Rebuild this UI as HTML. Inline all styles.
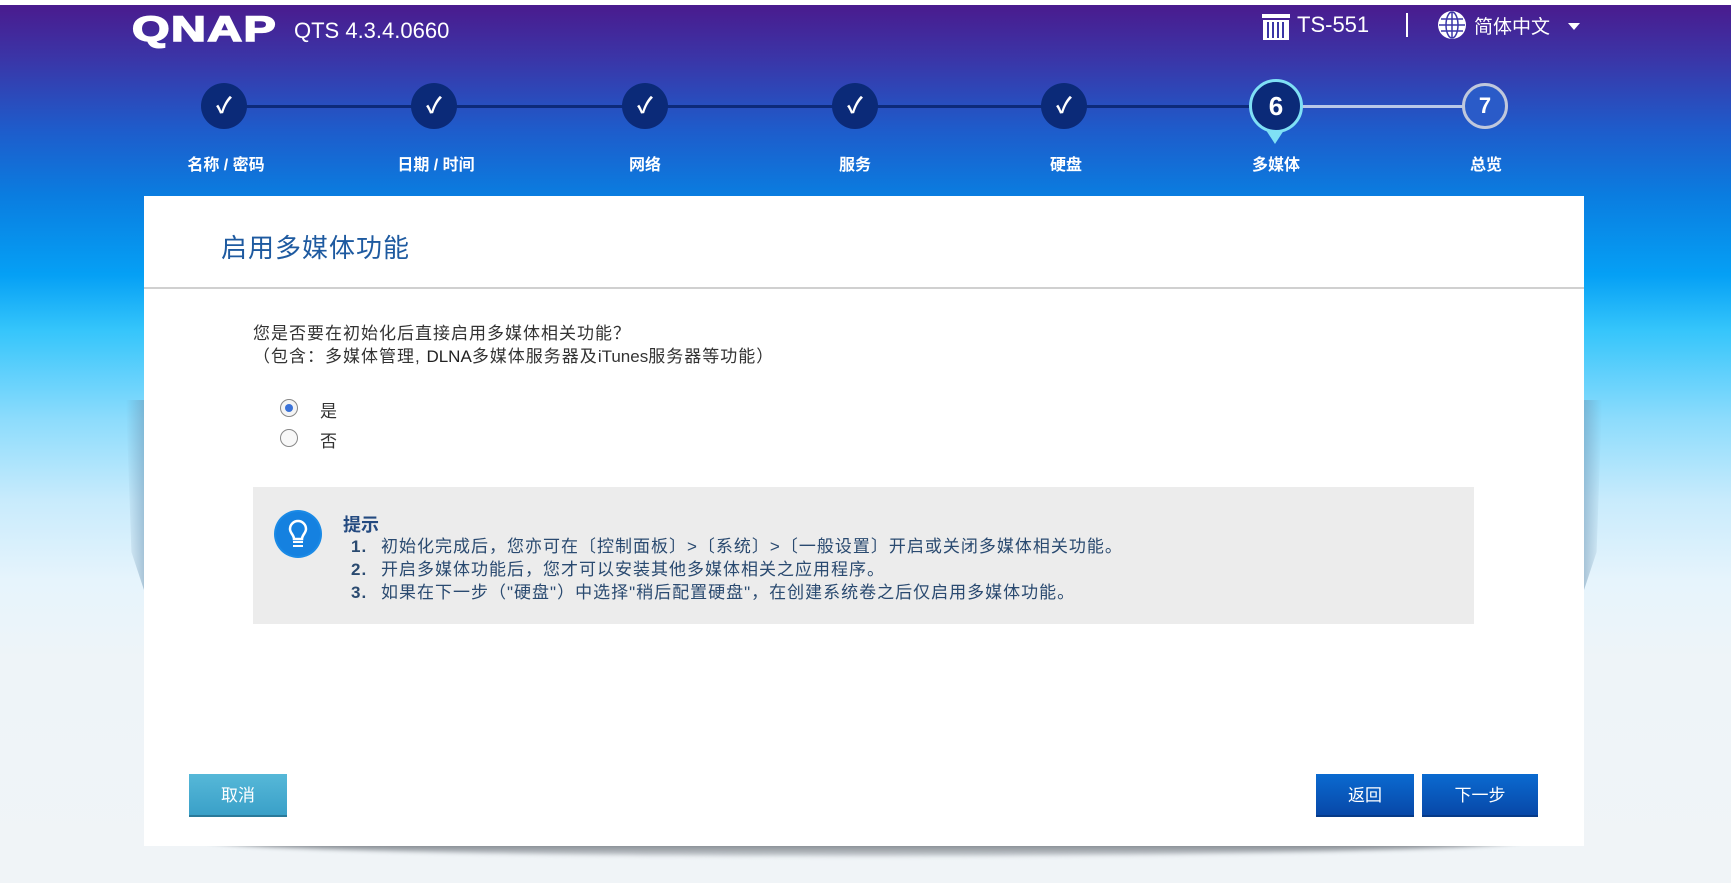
<!DOCTYPE html>
<html><head><meta charset="utf-8">
<style>
*{margin:0;padding:0;box-sizing:border-box}
body{width:1731px;height:883px;overflow:hidden;position:relative;font-family:"Liberation Sans","Noto Sans CJK SC",sans-serif;
background:linear-gradient(180deg,#fff 0,#fff 5px,#4a1b8e 5px,#3a36a8 60px,#1e5ccb 130px,#0a7de0 196px,#05a0f5 275px,#35c5fb 330px,#8ddcfc 420px,#c8ebfc 500px,#e6f4fc 580px,#eef4f8 660px,#f0f4f7 883px)}
.abs{position:absolute}
.logo{left:132px;top:10px;font:900 35px "Liberation Sans",sans-serif;color:#fff;letter-spacing:1px;transform:scaleX(1.38);transform-origin:left;-webkit-text-stroke:1.5px #fff}
.qts{left:294px;top:18px;font-size:22px;color:#fff}
.top{color:#fff;font-size:22px}
.line{top:105px;height:3px;background:#0d2a7a}
.circ{width:46px;height:46px;border-radius:50%;background:#0b2a78;color:#fff;text-align:center;line-height:46px;font-size:22px;font-weight:bold;top:83px}
.lbl{top:151px;color:#fff;font-size:16px;font-weight:bold;width:140px;text-align:center}
.card{left:144px;top:196px;width:1440px;height:650px;background:#fff}
.shadow{left:205px;top:840px;width:1318px;height:16px;background:linear-gradient(180deg,#6a7077,#c8cdd2);border-radius:0 0 50% 50%/0 0 100% 100%;filter:blur(2px)}
.txt{color:#333;font-size:17px;letter-spacing:1px}
.btn{color:#fff;font-size:17px;text-align:center;line-height:43px;height:43px}
</style></head><body>
<div class="abs" style="left:126px;top:400px;width:18px;height:190px;background:linear-gradient(90deg,rgba(120,160,190,0),rgba(110,150,180,.5));clip-path:polygon(0 0,100% 0,100% 100%,30% 80%)"></div>
<div class="abs" style="left:1584px;top:400px;width:18px;height:190px;background:linear-gradient(270deg,rgba(120,160,190,0),rgba(110,150,180,.5));clip-path:polygon(0 0,100% 0,70% 80%,0 100%)"></div>
<div class="abs logo">QNAP</div>
<div class="abs qts">QTS 4.3.4.0660</div>
<svg class="abs" style="left:1262px;top:14px" width="28" height="26"><rect x="0" y="0" width="28" height="4" fill="#fff"/><rect x="1" y="6" width="26" height="20" fill="#fff"/><g stroke="#3a35a5" stroke-width="2"><line x1="6" y1="8" x2="6" y2="24"/><line x1="11" y1="8" x2="11" y2="24"/><line x1="16" y1="8" x2="16" y2="24"/><line x1="21" y1="8" x2="21" y2="24"/></g></svg>
<div class="abs top" style="left:1297px;top:12px">TS-551</div>
<div class="abs" style="left:1406px;top:13px;width:2px;height:24px;background:#fff"></div>
<svg class="abs" style="left:1437px;top:10px" width="30" height="30"><circle cx="15" cy="15" r="14" fill="#fff"/><g stroke="#3a36a8" stroke-width="1.5" fill="none"><ellipse cx="15" cy="15" rx="6" ry="13"/><line x1="15" y1="2" x2="15" y2="28"/><line x1="2" y1="15" x2="28" y2="15"/><line x1="4" y1="9" x2="26" y2="9"/><line x1="4" y1="21" x2="26" y2="21"/></g></svg>
<div class="abs" style="left:1474px;top:12px;color:#fff;font-size:19px">简体中文</div>
<div class="abs" style="left:1568px;top:23px;border:6px solid transparent;border-top:7px solid #fff"></div>

<div class="abs line" style="left:224px;width:1051px"></div>
<div class="abs line" style="left:1275px;width:190px;background:#b8c8e8"></div>
<div class="abs circ" style="left:201px">✓</div>
<div class="abs circ" style="left:411px">✓</div>
<div class="abs circ" style="left:622px">✓</div>
<div class="abs circ" style="left:832px">✓</div>
<div class="abs circ" style="left:1041px">✓</div>
<div class="abs" style="left:1262px;top:124px;border:13px solid transparent;border-top:20px solid #7fe0f5"></div>
<div class="abs circ" style="left:1249px;top:79px;width:54px;height:54px;line-height:48px;border:3px solid #7fe0f5;font-size:26px">6</div>
<div class="abs circ" style="left:1462px;background:#2a5bc8;border:3px solid #c0c8dc;line-height:40px">7</div>
<div class="abs lbl" style="left:156px">名称 / 密码</div>
<div class="abs lbl" style="left:366px">日期 / 时间</div>
<div class="abs lbl" style="left:575px">网络</div>
<div class="abs lbl" style="left:785px">服务</div>
<div class="abs lbl" style="left:996px">硬盘</div>
<div class="abs lbl" style="left:1206px">多媒体</div>
<div class="abs lbl" style="left:1416px">总览</div>

<div class="abs shadow"></div>
<div class="abs card"></div>
<div class="abs" style="left:221px;top:228px;font-size:26px;color:#1e5aa0;letter-spacing:1px">启用多媒体功能</div>
<div class="abs" style="left:144px;top:287px;width:1440px;height:2px;background:#d0d0d0"></div>
<div class="abs txt" style="left:253px;top:319px">您是否要在初始化后直接启用多媒体相关功能？</div>
<div class="abs txt" style="left:253px;top:342px">（包含：多媒体管理, <span style="color:#222;letter-spacing:0">DLNA</span>多媒体服务器及<span style="letter-spacing:0">iTunes</span>服务器等功能）</div>
<div class="abs" style="left:280px;top:399px;width:18px;height:18px;border-radius:50%;border:1px solid #888;background:#f4f4f4"><div style="margin:4px;width:8px;height:8px;border-radius:50%;background:#3a72d8"></div></div>
<div class="abs" style="left:280px;top:429px;width:18px;height:18px;border-radius:50%;border:1px solid #888;background:#f8f8f8"></div>
<div class="abs txt" style="left:320px;top:397px">是</div>
<div class="abs txt" style="left:320px;top:427px">否</div>

<div class="abs" style="left:253px;top:487px;width:1221px;height:137px;background:#ececec"></div>
<svg class="abs" style="left:273px;top:509px" width="50" height="50"><circle cx="25" cy="25" r="24" fill="#1a8ae6"/><circle cx="25" cy="25" r="22" fill="#1581e0"/><path d="M17 20a8 8 0 1 1 16 0c0 4-4 6-4 10h-8c0-4-4-6-4-10z" fill="none" stroke="#fff" stroke-width="2.5"/><rect x="20" y="32" width="10" height="2" fill="#fff"/><rect x="20" y="36" width="10" height="2" fill="#fff"/></svg>
<div class="abs" style="left:343px;top:511px;font-size:18px;font-weight:bold;color:#244a80">提示</div>
<div class="abs" style="left:351px;top:535px;font-size:17px;letter-spacing:1px;color:#2a4a70;line-height:23px">
<div><b style="display:inline-block;width:30px">1.</b>初始化完成后，您亦可在〔控制面板〕>〔系统〕>〔一般设置〕开启或关闭多媒体相关功能。</div>
<div><b style="display:inline-block;width:30px">2.</b>开启多媒体功能后，您才可以安装其他多媒体相关之应用程序。</div>
<div><b style="display:inline-block;width:30px">3.</b>如果在下一步（"硬盘"）中选择"稍后配置硬盘"，在创建系统卷之后仅启用多媒体功能。</div>
</div>

<div class="abs btn" style="left:189px;top:774px;width:98px;background:linear-gradient(#56b8d8,#3aa0c8);border-bottom:2px solid #2a7a9a">取消</div>
<div class="abs btn" style="left:1316px;top:774px;width:98px;background:linear-gradient(#0a6ad0,#0848a8);border-bottom:2px solid #063a88">返回</div>
<div class="abs btn" style="left:1422px;top:774px;width:116px;background:linear-gradient(#0a6ad0,#0848a8);border-bottom:2px solid #063a88">下一步</div>
</body></html>
